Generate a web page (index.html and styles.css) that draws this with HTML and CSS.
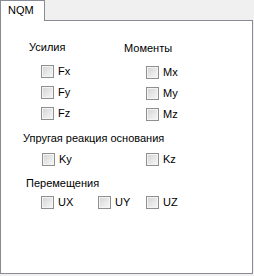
FILE: index.html
```html
<!DOCTYPE html>
<html lang="ru">
<head>
    <meta charset="UTF-8">
    <meta name="viewport" content="width=device-width, initial-scale=1.0">
    <title>NQM</title>
    <link rel="stylesheet" href="styles.css">
</head>
<body>
    <div class="tabs">
        <div class="tab">NQM</div>
    </div>
    <div class="panel">
        <div class="forces">
            <div class="column column-left">
                <div class="caption">Усилия</div>
                <div class="check-list">
                    <label class="check"><span class="box"></span>Fx</label>
                    <label class="check"><span class="box"></span>Fy</label>
                    <label class="check"><span class="box"></span>Fz</label>
                </div>
            </div>
            <div class="column column-right">
                <div class="caption">Моменты</div>
                <div class="check-list">
                    <label class="check"><span class="box"></span>Mx</label>
                    <label class="check"><span class="box"></span>My</label>
                    <label class="check"><span class="box"></span>Mz</label>
                </div>
            </div>
        </div>

        <div class="section section-base">
            <div class="caption">Упругая реакция основания</div>
            <div class="check-row">
                <label class="check check-ky"><span class="box"></span>Ky</label>
                <label class="check"><span class="box"></span>Kz</label>
            </div>
        </div>

        <div class="section section-move">
            <div class="caption">Перемещения</div>
            <div class="check-row">
                <label class="check check-ux"><span class="box"></span>UX</label>
                <label class="check check-uy"><span class="box"></span>UY</label>
                <label class="check"><span class="box"></span>UZ</label>
            </div>
        </div>
    </div>
</body>
</html>
```

FILE: styles.css
```css
body {
    margin: 0;
    padding: 0;
    background-color: #f0f0f0;
    font-family: "Liberation Sans", Arial, sans-serif;
    font-size: 11px;
    line-height: 13px;
    color: #000000;
}
.tabs {
    display: flex;
    height: 20px;
}
.tab {
    position: relative;
    z-index: 1;
    width: 36px;
    height: 17px;
    padding: 3px 0 0 7px;
    background-color: #ffffff;
    border: 1px solid #898c95;
    border-bottom: none;
}
.panel {
    width: 251px;
    height: 252px;
    background-color: #ffffff;
    border: 1px solid #898c95;
}
.forces {
    display: flex;
    margin-top: 20px;
}
.column-left {
    width: 95px;
    margin-left: 28px;
}
.column-right {
    padding-top: 1px;
}
.caption {
    height: 13px;
    white-space: nowrap;
}
.check-list {
    display: flex;
    flex-direction: column;
    gap: 8px;
    margin-top: 11px;
}
.column-left .check-list {
    margin-left: 12px;
}
.column-right .check-list {
    margin-left: 22px;
}
.check {
    display: flex;
    align-items: center;
    gap: 4px;
    height: 13px;
}
.box {
    display: inline-block;
    box-sizing: border-box;
    width: 13px;
    height: 13px;
    border: 1px solid #8e8f8f;
    background: linear-gradient(135deg, #d2d2d2 0%, #e6e6e6 50%, #f7f7f7 100%);
    box-shadow: inset 0 0 0 1px #f4f4f4;
}
.section {
    margin-top: 11px;
}
.section-base {
    margin-left: 22px;
}
.section-base .check-row {
    margin-top: 8px;
    margin-left: 19px;
}
.check-ky {
    width: 104px;
}
.section-move {
    margin-left: 25px;
}
.section-move .check-row {
    margin-top: 6px;
    margin-left: 15px;
}
.check-row {
    display: flex;
}
.check-ux {
    width: 57px;
}
.check-uy {
    width: 48px;
}
```
